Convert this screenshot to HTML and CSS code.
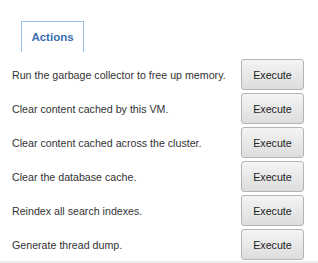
FILE: index.html
```html
<!DOCTYPE html>
<html>
    <head>
        <title>Actions</title>
        <link rel="stylesheet" href="styles.css">
    </head>
    <body>
        <div class="page">
            <div class="tabs">
                <div class="tab">Actions</div>
            </div>
            <div class="actions">
                <div class="row">
                    <label class="rowText">Run the garbage collector to free up memory.</label>
                    <button type="button" class="button">Execute</button>
                </div>
                <div class="row">
                    <label class="rowText">Clear content cached by this VM.</label>
                    <button type="button" class="button">Execute</button>
                </div>
                <div class="row">
                    <label class="rowText">Clear content cached across the cluster.</label>
                    <button type="button" class="button">Execute</button>
                </div>
                <div class="row">
                    <label class="rowText">Clear the database cache.</label>
                    <button type="button" class="button">Execute</button>
                </div>
                <div class="row">
                    <label class="rowText">Reindex all search indexes.</label>
                    <button type="button" class="button">Execute</button>
                </div>
                <div class="row">
                    <label class="rowText">Generate thread dump.</label>
                    <button type="button" class="button">Execute</button>
                </div>
            </div>
        </div>
    </body>
</html>
```

FILE: styles.css
```css
body {
    margin: 0;
    background-color: white;
    font-family: "Liberation Sans", Arial, sans-serif;
}

.page {
    width: 318px;
    height: 261px;
    border-bottom: 2px solid #eeeeee;
}

.tabs {
    padding-top: 21px;
    padding-left: 21px;
    height: 31px;
}

.tab {
    width: 61px;
    height: 31px;
    border: 1px solid #9dbfe8;
    border-bottom: none;
    color: #3a6eb2;
    font-weight: bold;
    font-size: 11.5px;
    line-height: 31px;
    text-align: center;
    box-sizing: border-box;
    width: 63px;
}

.actions {
    padding-top: 7px;
    padding-left: 12px;
    padding-right: 14px;
    display: flex;
    flex-direction: column;
    gap: 3px;
}

.row {
    display: flex;
    align-items: center;
    justify-content: space-between;
    height: 31px;
}

.rowText {
    color: #333333;
    font-size: 10.67px;
}

.button {
    width: 63px;
    height: 31px;
    border: 1px solid #b4b4b4;
    border-radius: 3px;
    background: linear-gradient(#f4f4f4, #dddddd);
    color: #222222;
    font-family: "Liberation Sans", Arial, sans-serif;
    font-size: 10.67px;
    padding: 0;
}
```
